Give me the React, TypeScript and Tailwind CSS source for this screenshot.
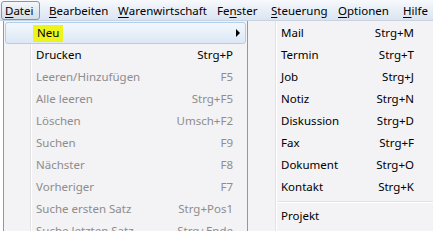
import React from "react";

const font = { fontFamily: '"Noto Sans", "Open Sans", sans-serif' };

type Item = { label: string; key?: string; disabled?: boolean };

const mainItems: Item[] = [
  { label: "Drucken", key: "Strg+P" },
  { label: "Leeren/Hinzufügen", key: "F5", disabled: true },
  { label: "Alle leeren", key: "Strg+F5", disabled: true },
  { label: "Löschen", key: "Umsch+F2", disabled: true },
  { label: "Suchen", key: "F9", disabled: true },
  { label: "Nächster", key: "F8", disabled: true },
  { label: "Vorheriger", key: "F7", disabled: true },
  { label: "Suche ersten Satz", key: "Strg+Pos1", disabled: true },
  { label: "Suche letzten Satz", key: "Strg+Ende", disabled: true },
];

const subItems: Item[] = [
  { label: "Mail", key: "Strg+M" },
  { label: "Termin", key: "Strg+T" },
  { label: "Job", key: "Strg+J" },
  { label: "Notiz", key: "Strg+N" },
  { label: "Diskussion", key: "Strg+D" },
  { label: "Fax", key: "Strg+F" },
  { label: "Dokument", key: "Strg+O" },
  { label: "Kontakt", key: "Strg+K" },
];

function BarItem({ pre, u, post, w, active }: { pre: string; u: string; post: string; w: string; active?: boolean }) {
  return (
    <div
      className={
        (active
          ? "h-[19px] pl-[3px] rounded-[3px] border border-[#8a96a3] bg-gradient-to-b from-[#f4f7fb] to-[#d4dde8] "
          : "h-[19px] pl-[5px] ") +
        "flex items-center whitespace-nowrap shrink-0 " +
        w
      }
    >
      {pre}
      <span className="underline underline-offset-2">{u}</span>
      {post}
    </div>
  );
}

export default function App() {
  return (
    <div className="w-[433px] h-[231px] overflow-hidden bg-white text-[11.5px] text-black" style={font}>
      <div className="h-[21px] flex items-start pt-[1px] pl-[1px] bg-gradient-to-b from-[#f7f9fd] to-[#dae4f1] border-b border-[#c9d3df]">
        <BarItem pre="" u="D" post="atei" w="w-[39px]" active />
        <BarItem pre="" u="B" post="earbeiten" w="w-[69px] ml-[4px]" />
        <BarItem pre="" u="W" post="arenwirtschaft" w="w-[99px]" />
        <BarItem pre="Fe" u="n" post="ster" w="w-[54px]" />
        <BarItem pre="" u="S" post="teuerung" w="w-[67px]" />
        <BarItem pre="" u="O" post="ptionen" w="w-[65px]" />
        <BarItem pre="" u="H" post="ilfe" w="w-[34px]" />
      </div>
      <div className="flex pl-[3px]">
        <div className="relative w-[244px] h-[210px] bg-[#f3f2f4] border-l border-[#979797] pt-[1px]">
          <div className="absolute left-[26px] top-0 bottom-0 w-[1px] bg-[#e2e1e3]" />
          <div className="absolute left-[27px] top-0 bottom-0 w-[1px] bg-white" />
          <div className="relative mx-[1px] h-[22px] flex items-center rounded-[3px] border border-[#b0cff0] bg-gradient-to-b from-[#f3f7fc] to-[#dce8f6]">
            <span className="ml-[27px] px-[4px] h-[17px] flex items-center bg-[#edf41c]">Neu</span>
            <span className="ml-auto mr-[5px] w-0 h-0 border-y-[4px] border-y-transparent border-l-[4px] border-l-black" />
          </div>
          {mainItems.map((it) => (
            <div
              key={it.label}
              className={"relative h-[22px] flex items-center pl-[32px] pr-[14px] whitespace-nowrap " + (it.disabled ? "text-[#8d8d8d]" : "text-black")}
            >
              <span>{it.label}</span>
              <span className="ml-auto">{it.key}</span>
            </div>
          ))}
        </div>
        <div className="relative flex-1 h-[210px] bg-[#f3f2f4] border-l border-[#979797] pt-[1px]">
          <div className="absolute left-[27px] top-0 bottom-0 w-[1px] bg-[#e2e1e3]" />
          <div className="absolute left-[28px] top-0 bottom-0 w-[1px] bg-white" />
          {subItems.map((it) => (
            <div key={it.label} className="relative h-[22px] flex items-center pl-[33px] pr-[19px]">
              <span>{it.label}</span>
              <span className="ml-auto">{it.key}</span>
            </div>
          ))}
          <div className="relative h-[7px] flex items-center pl-[29px]">
            <div className="w-full">
              <div className="h-[1px] bg-[#e2e1e3]" />
              <div className="h-[1px] bg-white" />
            </div>
          </div>
          <div className="relative h-[22px] flex items-center pl-[33px]">Projekt</div>
        </div>
      </div>
    </div>
  );
}
